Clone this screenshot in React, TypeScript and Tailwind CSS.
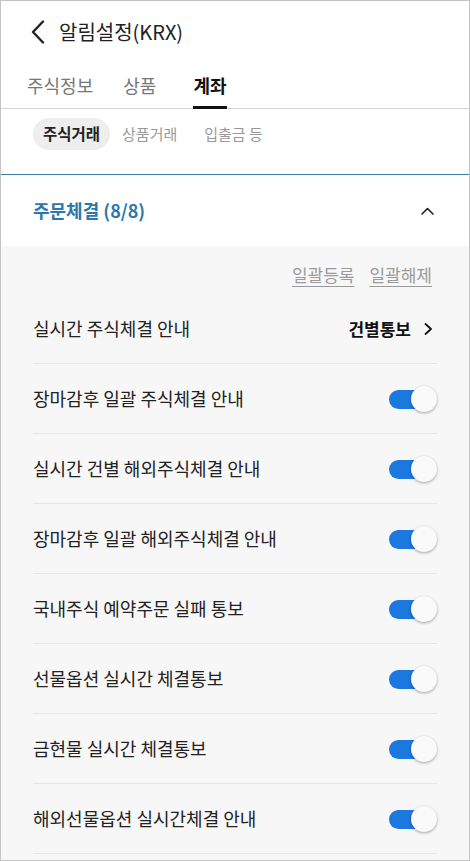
const rows = [
  '장마감후 일괄 주식체결 안내',
  '실시간 건별 해외주식체결 안내',
  '장마감후 일괄 해외주식체결 안내',
  '국내주식 예약주문 실패 통보',
  '선물옵션 실시간 체결통보',
  '금현물 실시간 체결통보',
  '해외선물옵션 실시간체결 안내',
];

function Toggle() {
  return (
    <div className="relative w-[48px] h-[26px]">
      <div className="absolute left-0 top-[4px] w-[40px] h-[19px] rounded-full bg-[#1b78de]" />
      <div className="absolute right-0 top-0 w-[26px] h-[26px] rounded-full bg-[#fafafa] shadow-[0_1px_3px_rgba(0,0,0,0.35)]" />
    </div>
  );
}

function Row({ label, children }: { label: string; children: React.ReactNode }) {
  return (
    <div className="mx-[32px] h-[70px] flex items-center justify-between border-b border-[#e6e6e6]">
      <span className="text-[18px] text-[#222]">{label}</span>
      {children}
    </div>
  );
}

export default function App() {
  return (
    <div
      className="w-[470px] h-[861px] border border-[#c4c4c4] overflow-hidden bg-white"
      style={{ fontFamily: '"Noto Sans CJK KR", sans-serif' }}
    >
      <div className="h-[61px] flex items-center pl-[30px] gap-[14px]">
        <svg width="14" height="24" viewBox="0 0 14 24" fill="none">
          <path d="M12 1.5 L2 12 L12 22.5" stroke="#222" strokeWidth="2.4" strokeLinecap="round" strokeLinejoin="round" />
        </svg>
        <span className="text-[20px] text-[#222]">알림설정(KRX)</span>
      </div>

      <div className="h-[47px] flex items-stretch px-[26px] border-b border-[#d4d4d4]">
        <div className="flex items-center text-[18px] text-[#777]">주식정보</div>
        <div className="flex items-center ml-[30px] text-[18px] text-[#777]">상품</div>
        <div className="relative flex items-center ml-[37px] text-[18px] font-bold text-[#111]">
          계좌
          <div className="absolute left-0 right-0 bottom-[-1px] h-[3px] bg-[#111]" />
        </div>
      </div>

      <div className="h-[66px] flex items-start pt-[9px] pl-[32px] border-b border-[#3e7ca4]">
        <div className="h-[32px] px-[10px] flex items-center rounded-full bg-[#eeeeee] text-[15.5px] font-semibold text-[#222]">주식거래</div>
        <div className="h-[32px] ml-[12px] flex items-center text-[15px] text-[#999]">상품거래</div>
        <div className="h-[32px] ml-[27px] flex items-center text-[15px] text-[#999]">입출금 등</div>
      </div>

      <div className="h-[71px] flex items-center justify-between pl-[32px] pr-[35px]">
        <span className="text-[18px] font-semibold text-[#2a78ad]">주문체결 (8/8)</span>
        <svg width="13" height="8" viewBox="0 0 13 8" fill="none">
          <path d="M1 7 L6.5 1.5 L12 7" stroke="#222" strokeWidth="1.6" strokeLinecap="round" strokeLinejoin="round" />
        </svg>
      </div>

      <div className="bg-[#f7f7f7] h-full">
        <div className="h-[48px] flex items-start justify-end gap-[15px] pt-[17px] pr-[37px]">
          <span className="text-[17px] leading-[24px] text-[#9a9a9a] underline underline-offset-[4px]">일괄등록</span>
          <span className="text-[17px] leading-[24px] text-[#9a9a9a] underline underline-offset-[4px]">일괄해제</span>
        </div>

        <Row label="실시간 주식체결 안내">
          <div className="flex items-center gap-[13px] pr-[4px]">
            <span className="text-[17px] font-bold text-[#111]">건별통보</span>
            <svg width="9" height="12" viewBox="0 0 9 12" fill="none">
              <path d="M1.5 1 L7 6 L1.5 11" stroke="#111" strokeWidth="1.8" strokeLinecap="round" strokeLinejoin="round" />
            </svg>
          </div>
        </Row>
        {rows.map((r) => (
          <Row key={r} label={r}>
            <Toggle />
          </Row>
        ))}
      </div>
    </div>
  );
}
